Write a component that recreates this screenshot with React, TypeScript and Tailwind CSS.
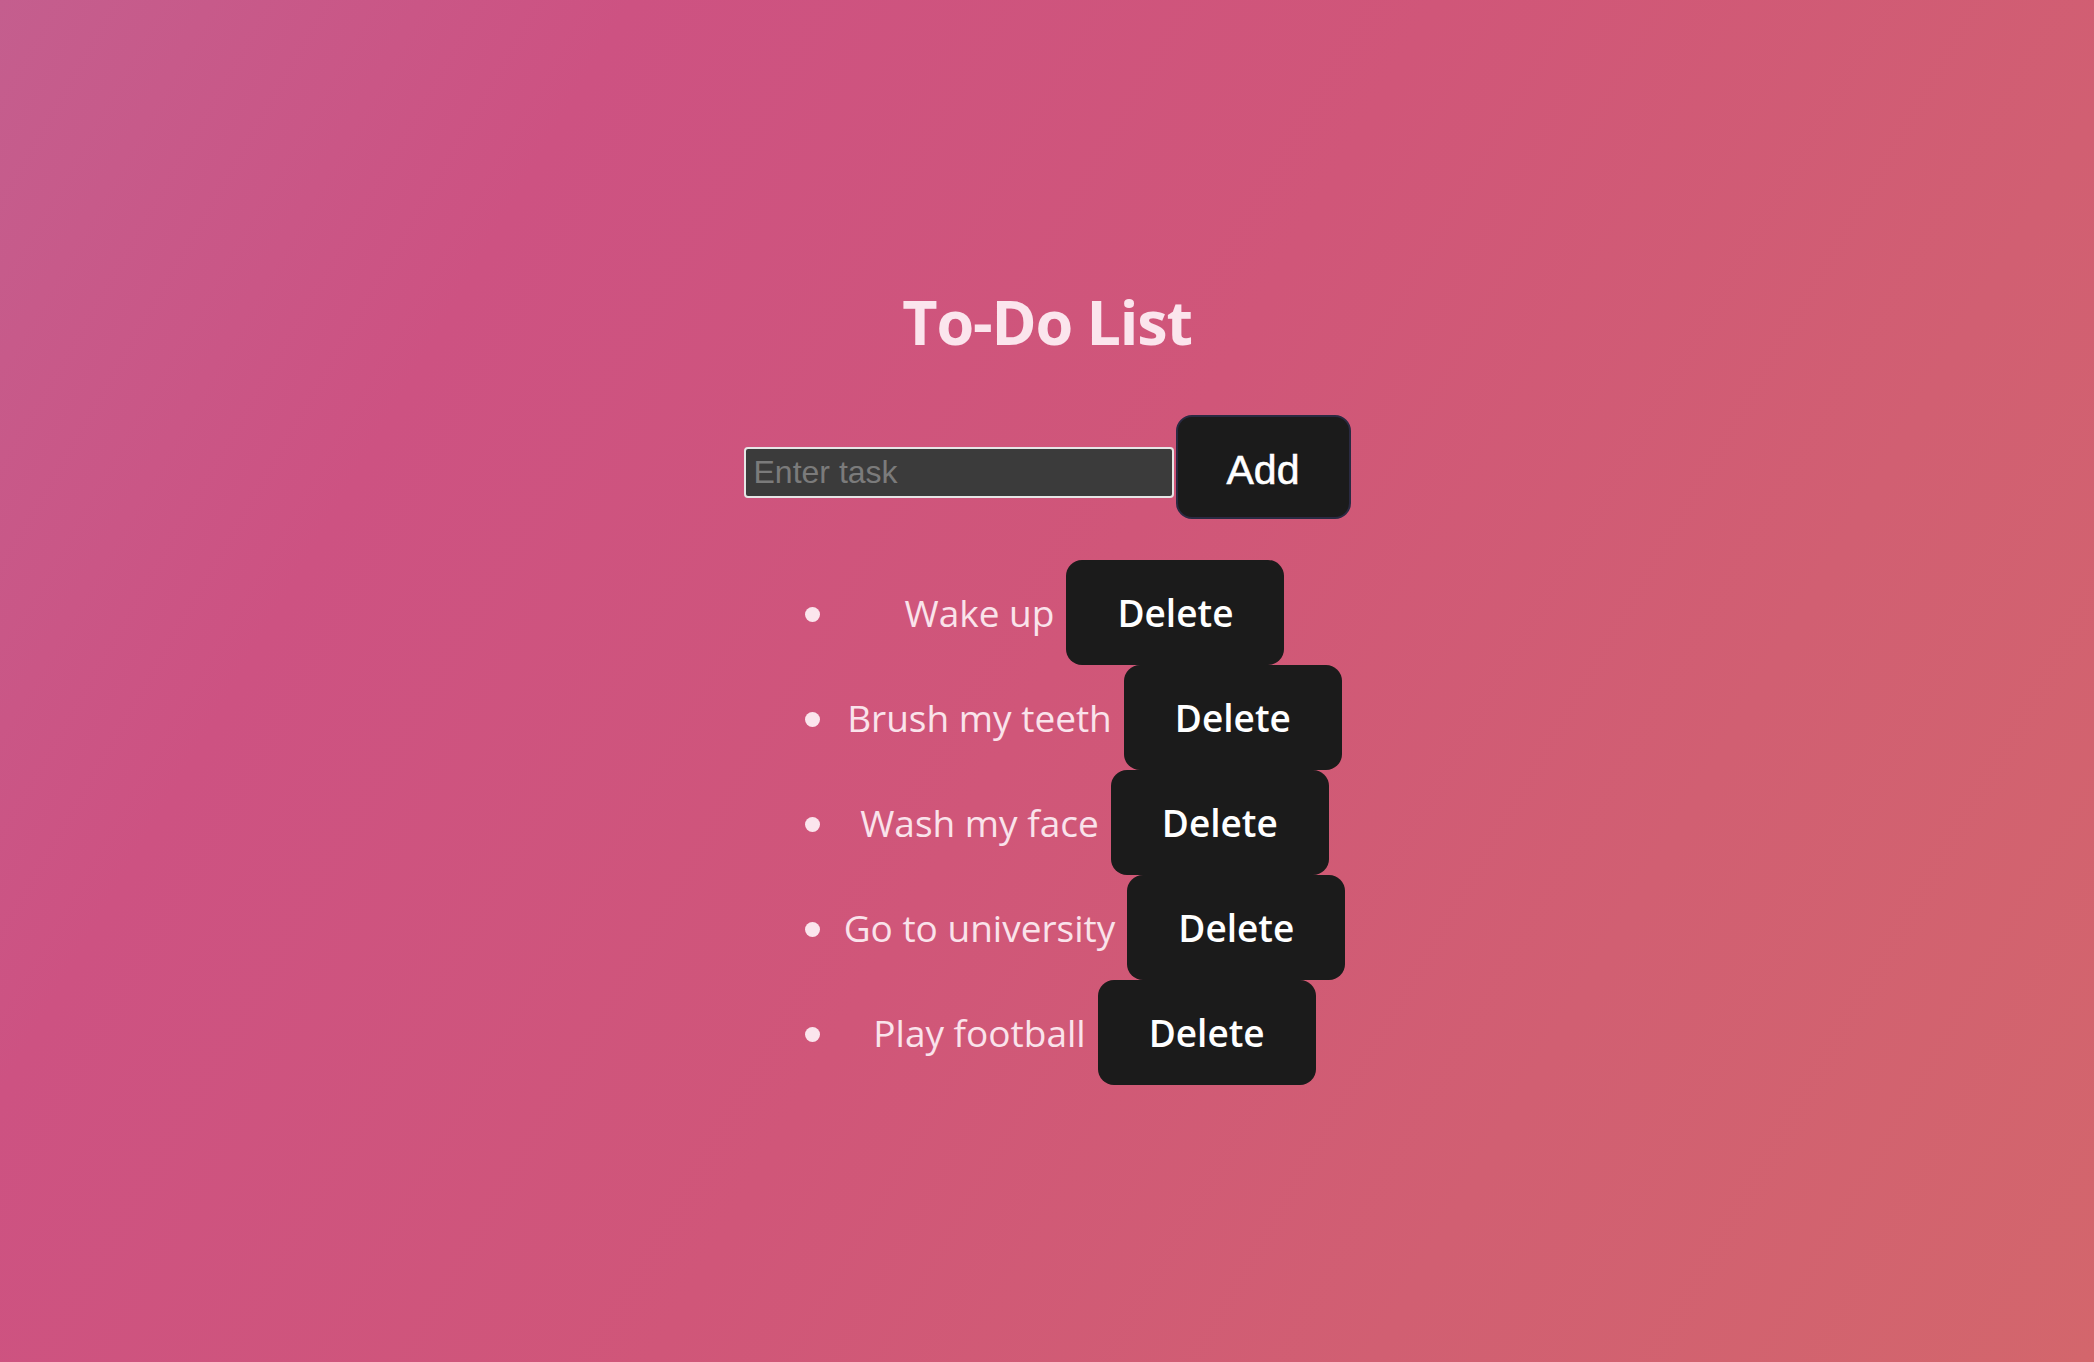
import React, { useState } from 'react';

interface Task {
  id: number;
  text: string;
}

const initialTasks: Task[] = [
  { id: 1, text: 'Wake up' },
  { id: 2, text: 'Brush my teeth' },
  { id: 3, text: 'Wash my face' },
  { id: 4, text: 'Go to university' },
  { id: 5, text: 'Play football' },
];

export default function App() {
  const [tasks, setTasks] = useState<Task[]>(initialTasks);
  const [value, setValue] = useState('');

  const addTask = () => {
    const text = value.trim();
    if (!text) return;
    setTasks((prev) => [...prev, { id: Date.now(), text }]);
    setValue('');
  };

  const removeTask = (id: number) => {
    setTasks((prev) => prev.filter((t) => t.id !== id));
  };

  return (
    <div className="min-h-screen w-full bg-[linear-gradient(120deg,#c45e8e_0%,#cd5282_22%,#d05679_50%,#d15f72_75%,#d3666c_100%)] flex flex-col items-center pt-[291px] font-['Open_Sans',sans-serif]">
      <h1 className="text-[61px] leading-[61px] font-bold text-[#fbe5ed] tracking-[-1.2px]">To-Do List</h1>

      {/* input row */}
      <div className="mt-[63px] flex items-start gap-[2px]">
        <input
          value={value}
          onChange={(e) => setValue(e.target.value)}
          placeholder="Enter task"
          className="mt-[32px] w-[430px] h-[51px] rounded-[4px] border-2 border-[#e6e6e6] bg-[#3b3b3b] px-[8px] text-[32px] text-white placeholder:text-[#7b7b7b] outline-none font-['Liberation_Sans',Arial,sans-serif]"
        />
        <button
          onClick={addTask}
          className="w-[175px] h-[104px] pt-[8px] rounded-[16px] border-2 border-[#2a2a42] bg-[#1b1b1b] text-white text-[41px] font-['Liberation_Sans',Arial,sans-serif] [-webkit-text-stroke:0.6px_white]"
        >
          Add
        </button>
      </div>

      <ul className="mt-[41px] ml-[62px] w-[546px] flex flex-col">
        {tasks.map((task) => (
          <li key={task.id} className="flex items-center">
            <span className="mt-[3px] w-[15px] h-[15px] rounded-full bg-[#fbe5ed] shrink-0" />
            <div className="ml-[18px] flex-1 flex items-baseline justify-center gap-[12px]">
              <span className="text-[37px] text-[#fae3eb]">{task.text}</span>
              <button
                onClick={() => removeTask(task.id)}
                className="h-[105px] px-[51px] rounded-[16px] bg-[#1b1b1b] text-white text-[37px] font-semibold"
              >
                Delete
              </button>
            </div>
          </li>
        ))}
      </ul>
    </div>
  );
}
